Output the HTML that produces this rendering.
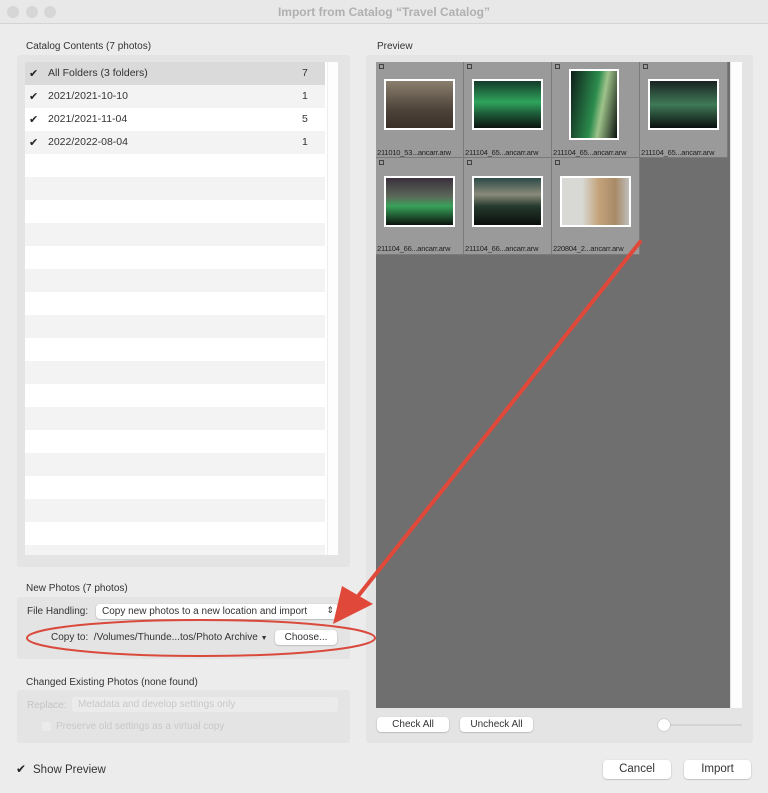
<!DOCTYPE html>
<html><head><meta charset="utf-8"><style>
*{margin:0;padding:0;box-sizing:border-box}
body{width:768px;height:793px;background:#ececec;font-family:"Liberation Sans",sans-serif;font-size:10px;color:#333;position:relative;overflow:hidden}
.a{position:absolute}
.lbl{font-size:10px;color:#333}
.btn{position:absolute;background:#fff;border-radius:4px;box-shadow:0 0.5px 1.5px rgba(0,0,0,.3);text-align:center;color:#333}
.cell{position:absolute;width:88px;height:96px;background:#9a9a9a;border-right:1px solid #7a7a7a;border-bottom:1px solid #7a7a7a}
.cell .ic{position:absolute;left:3px;top:2px;width:5px;height:5px;border:1px solid #444}
.cell .im{position:absolute;border:2px solid #fff}
.cell .nm{position:absolute;left:1px;top:86px;font-size:7.5px;color:#222;white-space:nowrap;letter-spacing:-.2px}
.row{position:absolute;left:25px;width:300px;height:23px}
.ck{position:absolute;left:4px;top:5px;font-size:11px;color:#222}
</style></head><body>
<!-- title bar -->
<div class="a" style="left:0;top:0;width:768px;height:24px;background:#e8e8e8;border-bottom:1px solid #d4d4d4"></div>
<div class="a" style="left:7px;top:6px;width:12px;height:12px;border-radius:6px;background:#d6d6d6"></div>
<div class="a" style="left:26px;top:6px;width:12px;height:12px;border-radius:6px;background:#d6d6d6"></div>
<div class="a" style="left:44px;top:6px;width:12px;height:12px;border-radius:6px;background:#d6d6d6"></div>
<div class="a" style="left:0;top:5px;width:768px;text-align:center;font-size:12px;font-weight:bold;color:#b0b0b0">Import from Catalog “Travel Catalog”</div>

<!-- catalog contents -->
<div class="a lbl" style="left:26px;top:41px">Catalog Contents (7 photos)</div>
<div class="a" style="left:17px;top:55px;width:333px;height:512px;background:#e4e4e4;border-radius:3px"></div>
<div class="a" style="left:25px;top:62px;width:313px;height:493px;background:#fff"></div>
<div class="a" style="left:327px;top:62px;width:11px;height:493px;background:#fdfdfd;border-left:1px solid #eee"></div>
<div id="rows"></div>
<div class="row" style="top:62px;background:#dadada"><span class="ck">✔</span><span class="a" style="left:23px;top:5px;font-size:10.5px">All Folders (3 folders)</span><span class="a" style="left:277px;top:5px;font-size:10.5px">7</span></div>
<div class="row" style="top:85px;background:#f3f3f3"><span class="ck">✔</span><span class="a" style="left:23px;top:5px;font-size:10.5px">2021/2021-10-10</span><span class="a" style="left:277px;top:5px;font-size:10.5px">1</span></div>
<div class="row" style="top:108px;background:#fff"><span class="ck">✔</span><span class="a" style="left:23px;top:5px;font-size:10.5px">2021/2021-11-04</span><span class="a" style="left:277px;top:5px;font-size:10.5px">5</span></div>
<div class="row" style="top:131px;background:#f3f3f3"><span class="ck">✔</span><span class="a" style="left:23px;top:5px;font-size:10.5px">2022/2022-08-04</span><span class="a" style="left:277px;top:5px;font-size:10.5px">1</span></div>
<div class="row" style="top:177px;background:#f3f3f3"></div>
<div class="row" style="top:223px;background:#f3f3f3"></div>
<div class="row" style="top:269px;background:#f3f3f3"></div>
<div class="row" style="top:315px;background:#f3f3f3"></div>
<div class="row" style="top:361px;background:#f3f3f3"></div>
<div class="row" style="top:407px;background:#f3f3f3"></div>
<div class="row" style="top:453px;background:#f3f3f3"></div>
<div class="row" style="top:499px;background:#f3f3f3"></div>
<div class="row" style="top:545px;height:10px;background:#f3f3f3"></div>

<!-- new photos -->
<div class="a lbl" style="left:26px;top:583px">New Photos (7 photos)</div>
<div class="a" style="left:17px;top:597px;width:333px;height:62px;background:#e4e4e4;border-radius:3px"></div>
<div class="a lbl" style="left:27px;top:606px">File Handling:</div>
<div class="btn" style="left:96px;top:604px;width:242px;height:15px;text-align:left;padding:2px 0 0 6px">Copy new photos to a new location and import<span class="a" style="right:4px;top:1px;font-size:9px">⇕</span></div>
<div class="a lbl" style="left:51px;top:632px">Copy to:&nbsp; /Volumes/Thunde...tos/Photo Archive <span style="font-size:7px">▼</span></div>
<div class="btn" style="left:275px;top:630px;width:62px;height:15px;padding-top:2px">Choose...</div>

<!-- changed existing -->
<div class="a lbl" style="left:26px;top:677px">Changed Existing Photos (none found)</div>
<div class="a" style="left:17px;top:690px;width:333px;height:53px;background:#e4e4e4;border-radius:3px"></div>
<div class="a" style="left:27px;top:700px;color:#c4c4c4">Replace:</div>
<div class="a" style="left:72px;top:697px;width:266px;height:15px;background:#ebebeb;border-radius:3px;color:#c8c8c8;padding:2px 0 0 6px">Metadata and develop settings only</div>
<div class="a" style="left:42px;top:722px;width:9px;height:9px;background:#ebebeb;border-radius:2px"></div>
<div class="a" style="left:56px;top:721px;color:#c8c8c8">Preserve old settings as a virtual copy</div>

<!-- preview -->
<div class="a lbl" style="left:377px;top:41px">Preview</div>
<div class="a" style="left:366px;top:55px;width:387px;height:688px;background:#e4e4e4;border-radius:3px"></div>
<div class="a" style="left:376px;top:62px;width:354px;height:646px;background:#6f6f6f"></div>
<div class="a" style="left:731px;top:62px;width:11px;height:646px;background:#fdfdfd"></div>

<div class="cell" style="left:376px;top:62px"><div class="ic"></div><div class="im" style="left:8px;top:17px;width:71px;height:51px;background:linear-gradient(#8a7f6e,#4f443a 60%,#3a3028)"></div><div class="nm">211010_53...ancarr.arw</div></div>
<div class="cell" style="left:464px;top:62px"><div class="ic"></div><div class="im" style="left:8px;top:17px;width:71px;height:51px;background:linear-gradient(#143a2a,#2fa45c 45%,#1d5a38 70%,#0c1510)"></div><div class="nm">211104_65...ancarr.arw</div></div>
<div class="cell" style="left:552px;top:62px"><div class="ic"></div><div class="im" style="left:17px;top:7px;width:50px;height:71px;background:linear-gradient(100deg,#0f1f1a,#2b8c4d 50%,#9fc38a 65%,#0a120e)"></div><div class="nm">211104_65...ancarr.arw</div></div>
<div class="cell" style="left:640px;top:62px"><div class="ic"></div><div class="im" style="left:8px;top:17px;width:71px;height:51px;background:linear-gradient(#1a2322,#3f7a57 50%,#0b100e)"></div><div class="nm">211104_65...ancarr.arw</div></div>
<div class="cell" style="left:376px;top:158px;height:97px"><div class="ic"></div><div class="im" style="left:8px;top:18px;width:71px;height:51px;background:linear-gradient(#3a2f3c,#5c6a5a 40%,#37a25a 60%,#0b120d)"></div><div class="nm">211104_66...ancarr.arw</div></div>
<div class="cell" style="left:464px;top:158px;height:97px"><div class="ic"></div><div class="im" style="left:8px;top:18px;width:71px;height:51px;background:linear-gradient(#2c4a46,#8a8a7a 35%,#263a2e 60%,#0b0f0c)"></div><div class="nm">211104_66...ancarr.arw</div></div>
<div class="cell" style="left:552px;top:158px;height:97px"><div class="ic"></div><div class="im" style="left:8px;top:18px;width:71px;height:51px;background:linear-gradient(90deg,#d8d8d4 30%,#c4a27a 55%,#a88a68 80%,#bfbfbb)"></div><div class="nm">220804_2...ancarr.arw</div></div>

<div class="btn" style="left:377px;top:717px;width:72px;height:15px;padding-top:2px">Check All</div>
<div class="btn" style="left:460px;top:717px;width:73px;height:15px;padding-top:2px">Uncheck All</div>
<div class="a" style="left:664px;top:724px;width:78px;height:2px;background:#d4d4d4"></div>
<div class="a" style="left:658px;top:719px;width:12px;height:12px;border-radius:6px;background:#fff;box-shadow:0 0 1.5px rgba(0,0,0,.35)"></div>

<!-- bottom -->
<div class="a" style="left:16px;top:762px;font-size:12px;color:#222">✔</div>
<div class="a" style="left:33px;top:764px;font-size:11.5px;color:#333">Show Preview</div>
<div class="btn" style="left:603px;top:760px;width:68px;height:19px;font-size:11.5px;padding-top:3px">Cancel</div>
<div class="btn" style="left:684px;top:760px;width:67px;height:19px;font-size:11.5px;padding-top:3px">Import</div>

<!-- annotation -->
<svg class="a" style="left:0;top:0" width="768" height="793">
<ellipse cx="201" cy="638" rx="174" ry="18" fill="none" stroke="#d94a3c" stroke-width="2"/>
<line x1="640" y1="242" x2="355" y2="600" stroke="#e0483a" stroke-width="4" stroke-linecap="round"/>
<polygon points="333,624 342,586 373,604" fill="#e0483a"/>
</svg>
</body></html>
